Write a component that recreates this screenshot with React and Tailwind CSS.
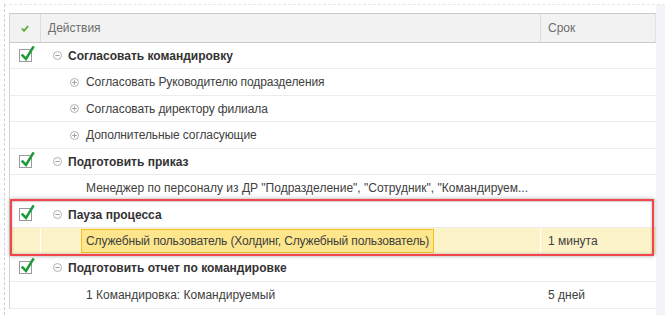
import React from "react";

function Check() {
  return (
    <span className="relative inline-block w-[13px] h-[13px] border border-[#9a9a9a] bg-white">
      <svg className="absolute left-[1px] -top-[4px]" width="14" height="16" viewBox="0 0 14 16">
        <path d="M1.5 9.5 L5 13 L12 1.5" fill="none" stroke="#1f9b3e" strokeWidth="2.6" strokeLinecap="square" strokeLinejoin="miter" />
      </svg>
    </span>
  );
}

function Minus() {
  return (
    <svg width="9" height="9" viewBox="0 0 9 9" className="shrink-0">
      <circle cx="4.5" cy="4.5" r="4" fill="none" stroke="#b0b0b0" strokeWidth="1" />
      <path d="M2.3 4.5 H6.7" stroke="#a0a0a0" strokeWidth="1" />
    </svg>
  );
}

function Plus() {
  return (
    <svg width="9" height="9" viewBox="0 0 9 9" className="shrink-0">
      <circle cx="4.5" cy="4.5" r="4" fill="none" stroke="#b0b0b0" strokeWidth="1" />
      <path d="M2.3 4.5 H6.7 M4.5 2.3 V6.7" stroke="#a0a0a0" strokeWidth="1" />
    </svg>
  );
}

function Row({ h, check, icon, level, bold, text, term, highlight }) {
  return (
    <div
      className={
        "flex items-center border-b " +
        (highlight ? "bg-[#fdf3c8] border-[#f3ecd6]" : "bg-white border-[#ececec]") +
        " " + h
      }
    >
      <div className={"w-[31px] h-full flex items-center pl-[9px] shrink-0 " + (highlight ? "border-r border-white" : "")}>
        {check ? <Check /> : null}
      </div>
      <div className={"w-[500px] h-full flex items-center shrink-0 " + (highlight ? "border-r border-white" : "")}>
        {level === 0 ? (
          <div className="flex items-center pl-[12px]">
            <Minus />
            <span className={"ml-[6px] " + (bold ? "font-bold text-[#333]" : "text-[#404040]")}>{text}</span>
          </div>
        ) : icon === "plus" ? (
          <div className="flex items-center pl-[29px]">
            <Plus />
            <span className="ml-[7px] text-[#404040] tracking-[-0.1px]">{text}</span>
          </div>
        ) : highlight ? (
          <div className="pl-[40px] h-full flex items-center">
            <span className="h-[24px] flex items-center px-[4px] bg-[#fde68c] border border-[#f3bf2a] text-[#404040] whitespace-nowrap tracking-[-0.14px]">
              {text}
            </span>
          </div>
        ) : (
          <div className="pl-[45px] text-[#404040] whitespace-nowrap">{text}</div>
        )}
      </div>
      <div className="flex-1 pl-[7px] text-[#404040]">{term}</div>
    </div>
  );
}

export default function App() {
  return (
    <div
      className="w-[665px] h-[315px] bg-white overflow-hidden text-[12px] leading-none"
      style={{ fontFamily: '"Liberation Sans", Arial, sans-serif' }}
    >
      <div className="pl-[4px] pt-[4px] h-full">
        <div className="h-full flex border-t border-[#e6e6e6] border-l border-dashed border-l-[#cfcfcf]">
          <div className="flex-1 pl-[4px] pt-[8px]">
            <div className="border-l border-[#d4d4d4]">
              <div className="flex h-[30px] bg-[#f2f2f2] border-t border-b border-[#c9c9c9] border-r border-r-[#e2e2e2]">
                <div className="w-[31px] shrink-0 flex items-center justify-center border-r border-[#dcdcdc]">
                  <svg width="8" height="7" viewBox="0 0 8 7">
                    <path d="M0.8 3.5 L3 5.8 L7.2 1" fill="none" stroke="#4fae2e" strokeWidth="1.8" />
                  </svg>
                </div>
                <div className="w-[500px] shrink-0 flex items-center pl-[7px] border-r border-[#dcdcdc] text-[#6e6e6e]">
                  Действия
                </div>
                <div className="flex-1 flex items-center pl-[7px] text-[#6e6e6e]">Срок</div>
              </div>

              <Row h="h-[26px]" check level={0} bold text="Согласовать командировку" />
              <Row h="h-[27px]" level={1} icon="plus" text="Согласовать Руководителю подразделения" />
              <Row h="h-[26px]" level={1} icon="plus" text="Согласовать директору филиала" />
              <Row h="h-[27px]" level={1} icon="plus" text="Дополнительные согласующие" />
              <Row h="h-[26px]" check level={0} bold text="Подготовить приказ" />
              <Row
                h="h-[27px]"
                level={1}
                text={'Менеджер по персоналу из ДР "Подразделение", "Сотрудник", "Командируем...'}
              />
              <div className="relative">
                <Row h="h-[26px]" check level={0} bold text="Пауза процесса" />
                <Row
                  h="h-[26px]"
                  level={1}
                  highlight
                  text="Служебный пользователь (Холдинг, Служебный пользователь)"
                  term="1 минута"
                />
                <div className="absolute -top-[3px] -bottom-[2px] left-0 right-[2px] border-2 border-[#f2464b] shadow-[0_0_4px_rgba(0,0,0,0.35),inset_0_0_3px_rgba(0,0,0,0.25)] pointer-events-none" />
              </div>
              <Row h="h-[28px]" check level={0} bold text="Подготовить отчет по командировке" />
              <Row h="h-[27px]" level={1} text="1 Командировка: Командируемый" term="5 дней" />
            </div>
          </div>
          <div className="w-[9px] shrink-0 bg-[#f3f4f7]" />
        </div>
      </div>
    </div>
  );
}
